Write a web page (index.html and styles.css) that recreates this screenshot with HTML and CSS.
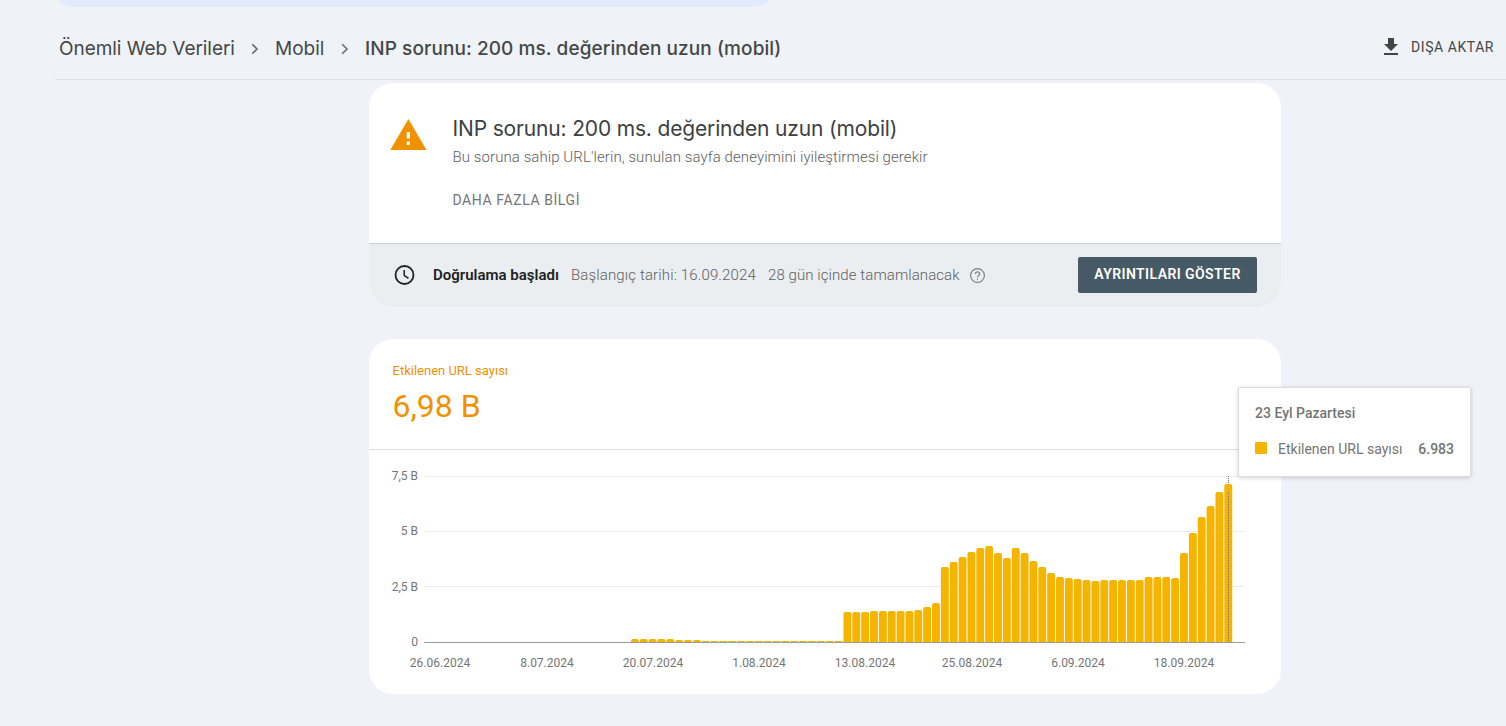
FILE: index.html
```html
<!DOCTYPE html>
<html lang="tr">
<head>
<meta charset="utf-8" />
<title>Önemli Web Verileri</title>
<link rel="stylesheet" href="styles.css">
</head>

<body>
<div class="search"></div>
<div class="header">
	<div class="crumbs">
		<span class="crumb c1">Önemli Web Verileri</span>
		<svg class="arrow" width="8" height="12" viewBox="0 0 8 12"><path d="M1.2 1.2L6 6l-4.800 4.800" /></svg>
		<span class="crumb c2">Mobil</span>
		<svg class="arrow" width="8" height="12" viewBox="0 0 8 12"><path d="M1.2 1.2L6 6l-4.800 4.800" /></svg>
		<span class="crumb now">INP sorunu: 200 ms. değerinden uzun (mobil)</span>
	</div>
	<div class="export">
		<svg width="14" height="17" viewBox="0 0 14 17"><path d="M14 6h-4V0H4v6H0l7 7zM0 15v2h14v-2z" /></svg>
		<span>DIŞA AKTAR</span>
	</div>
</div>

<div class="card issue">
	<div class="info">
		<svg class="warn" width="37" height="31" viewBox="0 0 37 31"><path d="M.300 31h36.200L18.400 0z" fill="#f29100" /><path d="M16.700 22.500h3.300V26h-3.300zM16.700 13h3.300v6.500h-3.300z" fill="#fff" /></svg>
		<div class="text">
			<h1>INP sorunu: 200 ms. değerinden uzun (mobil)</h1>
			<p>Bu soruna sahip URL'lerin, sunulan sayfa deneyimini iyileştirmesi gerekir</p>
			<a class="more">DAHA FAZLA BİLGİ</a>
		</div>
	</div>
	<div class="status">
		<svg class="clock" width="21" height="20" viewBox="0 0 21 20"><circle cx="10.500" cy="10" r="9" /><path d="M10.200 5v5.300l4.300 3" /></svg>
		<b>Doğrulama başladı</b>
		<span class="start">Başlangıç tarihi: 16.09.2024</span>
		<span class="rest">28 gün içinde tamamlanacak</span>
		<svg class="help" width="15" height="15" viewBox="0 0 15 15"><circle cx="7.500" cy="7.500" r="6.900" /><path d="M5.300 5.900c0-1.300 1-2.100 2.200-2.100s2.200.8 2.200 2c0 1.600-2.200 1.700-2.200 3.500M7.500 10.500v1.300" /></svg>
		<a class="button">AYRINTILARI GÖSTER</a>
	</div>
</div>

<div class="card report">
	<div class="total">
		<div class="label">Etkilenen URL sayısı</div>
		<div class="value">6,98 B</div>
	</div>
	<svg id="chart" width="912" height="244" viewBox="369 450 912 244">
		<path class="grid" d="M424 476.500h821M424 531.500h821M424 586.500h821" />
		<g class="axis end">
			<text x="418" y="480">7,5 B</text>
			<text x="418" y="535">5 B</text>
			<text x="418" y="591">2,5 B</text>
			<text x="418" y="646">0</text>
		</g>
		<g id="bars"></g>
		<path class="base" d="M424 642.500h821" />
		<path class="cursor" d="M1228.500 476v8M1228.500 492v150" />
		<g class="axis mid">
			<text x="440" y="667">26.06.2024</text>
			<text x="547" y="667">8.07.2024</text>
			<text x="653" y="667">20.07.2024</text>
			<text x="759" y="667">1.08.2024</text>
			<text x="865" y="667">13.08.2024</text>
			<text x="972" y="667">25.08.2024</text>
			<text x="1078" y="667">6.09.2024</text>
			<text x="1184" y="667">18.09.2024</text>
		</g>
	</svg>
	<div class="tip">
		<div class="day">23 Eyl Pazartesi</div>
		<div class="row"><i></i><span>Etkilenen URL sayısı</span><b>6.983</b></div>
	</div>
</div>
<script type="text/javascript">
//bar heights in px, one per day from 20.07
var aBar=[3,3,3,3,3,2,2,2,1,1,1,1,1,1,1,1,1,1,1,1,1,1,1,1,
	30,30,30,31,31,31,31,31,32,35,39,75,80,85,90,94,96,89,84,94,89,81,75,69,65,64,63,62,61,62,62,62,62,62,65,65,65,64,89,109,125,136,150,158];
var oBars=document.getElementById('bars');
var i=0;
for(i=0;i<aBar.length;i++)
{
	var x=630.9+i*8.857;
	var h=aBar[i];
	var r=Math.min(2,h);
	var oPath=document.createElementNS('http://www.w3.org/2000/svg','path');
	oPath.setAttribute('d','M'+x+' 642v'+(r-h)+'q0 '+(-r)+' '+r+' '+(-r)+'h'+(7.9-2*r)+'q'+r+' 0 '+r+' '+r+'v'+(h-r)+'z');
	oBars.appendChild(oPath);
}
</script>
</body>
</html>
```
FILE: styles.css
```css
*{ margin:0; padding:0; box-sizing:border-box;}
body{ background:#eff3f8; font-family:Roboto,"Liberation Sans",sans-serif; color:#757575; height:726px; overflow:hidden;}
svg{ display:block; flex:none;}
.search{ width:710px; height:7px; margin-left:59px; background:#e1ebfd; border-radius:0 0 20px 20px / 0 0 7px 7px;}
.header{ height:73px; margin-left:55px; border-bottom:1px solid #dfe2e4; display:flex; justify-content:space-between; padding:24px 12px 0 4px; color:#444746;}
.crumbs{ display:flex; height:36px; align-items:center; font:19px/34px Inter,sans-serif; white-space:nowrap;}
.c1{ width:176px; letter-spacing:-.05px;}
.c2{ width:50px;}
.now{ width:418px; font-weight:500; letter-spacing:.08px;}
.arrow{ margin:0 16px; fill:none; stroke:#6b6e70; stroke-width:1.6;}
.export{ display:flex; height:32px; align-items:center; gap:13px; font-size:14px; font-weight:450; letter-spacing:.55px;}
.export svg{ fill:#444; margin-bottom:2px;}
.card{ width:912px; margin-left:369px; background:#fff; border-radius:24px; position:relative;}
.issue{ margin-top:3px; height:224px; overflow:hidden;}
.info{ height:160px; display:flex; padding:31px 0 0 21px;}
.warn{ margin:5px 25px 0 0;}
h1{ font:400 21px/30px Inter,sans-serif; letter-spacing:-.16px; color:#3c4043; white-space:nowrap;}
.text{ padding-left:.5px;}
.text p{ font-size:15px; line-height:20px; margin-top:3px; font-weight:300; letter-spacing:.08px; color:#606060;}
.more{ display:block; font-size:14px; line-height:20px; margin-top:23px; letter-spacing:.58px;}
.status{ height:64px; border-top:1px solid #c9ced1; background:#eaeef1; display:flex; align-items:center; padding:0 24px 1px 25px; font-size:15px; white-space:nowrap;}
.status b{ margin-left:18px; width:126px; font-size:15px; font-weight:600; color:#212121;}
.clock{ fill:none; stroke:#212121; stroke-width:1.8;}
.clock path{ stroke-width:1.5;}
.start{ margin-left:12px; width:186px; font-weight:300; letter-spacing:.14px; color:#606060;}
.rest{ margin-left:11px; width:193px; font-weight:300; letter-spacing:.08px; color:#606060;}
.help{ margin-left:9px; fill:none; stroke:#808080; stroke-width:1.2;}
.button{ margin-left:auto; width:179px; height:36px; line-height:35px; background:#455a64; color:#fff; border-radius:2px; text-align:center; font-size:14px; font-weight:600; letter-spacing:.42px;}
.report{ margin-top:32px; height:355px;}
.total{ height:111px; border-bottom:1px solid #dedede; padding:22px 0 0 23.5px; color:#f29100;}
.label{ font-size:13px; line-height:20px;}
.value{ font-size:32px; line-height:40px; margin-top:5px;}
.grid{ stroke:#ebebeb; fill:none;}
.base{ stroke:#9a9a9a;}
.cursor{ stroke:#757575; stroke-dasharray:1 1; fill:none;}
.axis{ font-size:12px; fill:#757575;}
.end{ text-anchor:end;}
.mid{ text-anchor:middle;}
#bars{ fill:#f5b400;}
.tip{ position:absolute; left:869px; top:48px; width:233px; height:90px; background:rgba(255,255,255,.98); border:1px solid #dcdcdc; border-radius:2px; box-shadow:0 1px 4px rgba(0,0,0,.18); padding:15px 16px; font-size:14px; white-space:nowrap;}
.day{ line-height:20px; font-weight:500;}
.row{ display:flex; align-items:center; line-height:20px; margin-top:16px;}
.row i{ width:12px; height:12px; background:#f5b400; border-radius:1px; margin-right:11px; position:relative; top:-1px;}
.row b{ margin-left:auto; font-weight:500;}
```
